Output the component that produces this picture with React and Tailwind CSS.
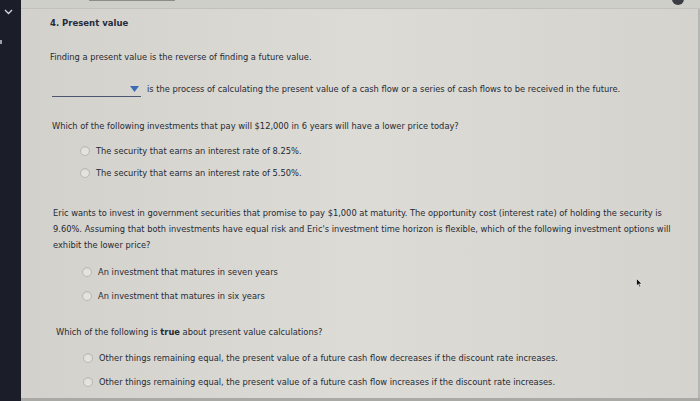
import React from "react";

function Radio({ label, className = "" }) {
  return (
    <div className={`flex items-center h-4 ${className}`}>
      <span className="w-[10px] h-[10px] rounded-full border border-[#b9b9b4] bg-[#e4e4df] shadow-[inset_0_1px_1px_rgba(0,0,0,0.08)] mr-[6px] shrink-0"></span>
      <span>{label}</span>
    </div>
  );
}

export default function App() {
  return (
    <div
      className="w-[700px] h-[401px] flex overflow-hidden text-[8.3px] leading-4 text-[#262a33]"
      style={{ fontFamily: '"DejaVu Sans", Verdana, sans-serif' }}
    >
      {/* Sidebar */}
      <div className="w-[21px] shrink-0 bg-[#1b1e29] relative">
        <svg className="absolute left-[4px] top-[9px]" width="9" height="6" viewBox="0 0 9 6">
          <path d="M1 1 L4.5 4.5 L8 1" fill="none" stroke="#d7d9e0" strokeWidth="1.3" />
        </svg>
        <span className="absolute left-0 top-[40px] w-[2px] h-[4px] bg-[#9aa0ad]"></span>
      </div>

      {/* Main */}
      <div className="flex-1 relative bg-gradient-to-r from-[#d2d1cc] via-[#dcdbd6] to-[#d4d3ce] border-b-[3px] border-[#a9a9a5]">
        <div className="h-[9px] bg-[#cfcfca] border-b border-[#c2c2bd] relative">
          <span className="absolute left-[68px] top-0 w-[86px] h-[1px] bg-[#8d8d8a]"></span>
        </div>
        <span className="absolute right-[16px] top-[-7px] w-[12px] h-[12px] rounded-full bg-[#3a3d44]"></span>
        <span className="absolute right-0 top-[9px] bottom-0 w-[2px] bg-[#b5b5b1]"></span>

        <div className="pl-[29px]">
          <div className="mt-[6px] font-bold text-[8.5px] text-[#252a3c]">4. Present value</div>

          <div className="mt-[18px]">Finding a present value is the reverse of finding a future value.</div>

          <div className="mt-[16px] flex items-center ml-[2px] h-4">
            <div className="relative w-[89px] h-4 border-b border-[#4c5670] mr-[6px]">
              <svg className="absolute right-[2px] top-[5px]" width="9" height="6" viewBox="0 0 9 6">
                <path d="M0 0 L9 0 L4.5 6 Z" fill="#3b6cb4" />
              </svg>
            </div>
            <span>is the process of calculating the present value of a cash flow or a series of cash flows to be received in the future.</span>
          </div>

          <div className="mt-[21px] ml-[2px]">Which of the following investments that pay will $12,000 in 6 years will have a lower price today?</div>

          <Radio className="mt-[9px] ml-[30px]" label="The security that earns an interest rate of 8.25%." />
          <Radio className="mt-[6px] ml-[30px]" label="The security that earns an interest rate of 5.50%." />

          <div className="mt-[24px] ml-[3px] whitespace-nowrap">
            Eric wants to invest in government securities that promise to pay $1,000 at maturity. The opportunity cost (interest rate) of holding the security is
            <br />
            9.60%. Assuming that both investments have equal risk and Eric's investment time horizon is flexible, which of the following investment options will
            <br />
            exhibit the lower price?
          </div>

          <Radio className="mt-[11px] ml-[32px]" label="An investment that matures in seven years" />
          <Radio className="mt-[8px] ml-[32px]" label="An investment that matures in six years" />

          <div className="mt-[20px] ml-[6px]">
            Which of the following is <span className="font-bold">true</span> about present value calculations?
          </div>

          <Radio className="mt-[10px] ml-[33px]" label="Other things remaining equal, the present value of a future cash flow decreases if the discount rate increases." />
          <Radio className="mt-[8px] ml-[33px]" label="Other things remaining equal, the present value of a future cash flow increases if the discount rate increases." />
        </div>

        {/* mouse cursor */}
        <svg className="absolute left-[615px] top-[278px]" width="7" height="10" viewBox="0 0 7 10">
          <path d="M0.5 0.5 L0.5 8 L2.3 6.3 L3.6 9.3 L4.8 8.8 L3.5 5.9 L6 5.9 Z" fill="#111" stroke="#fff" strokeWidth="0.6" />
        </svg>
      </div>
    </div>
  );
}
